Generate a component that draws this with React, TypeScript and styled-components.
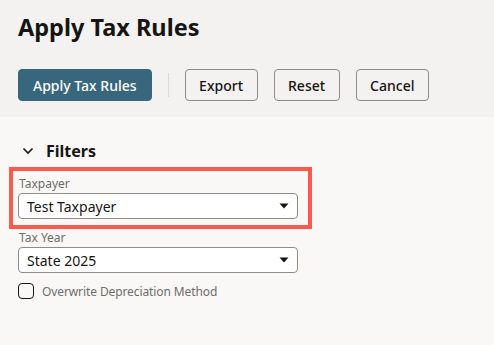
import React from "react";
import styled, { createGlobalStyle } from "styled-components";

const Global = createGlobalStyle`
  html, body { margin: 0; padding: 0; }
  body {
    background: #f9f8f6;
    font-family: "Noto Sans", "Open Sans", sans-serif;
    color: #161513;
  }
  * { box-sizing: border-box; }
`;

const Page = styled.div`
  display: flex;
  flex-direction: column;
  min-height: 345px;
`;

const Header = styled.header`
  background: #f3f2f0;
  height: 117px;
  padding: 10px 18px 0;
  display: flex;
  flex-direction: column;
`;

const Title = styled.h1`
  margin: 0;
  font-size: 23.5px;
  line-height: 34px;
  font-weight: 700;
  color: #161513;
`;

const Toolbar = styled.div`
  margin-top: 25px;
  display: flex;
  align-items: center;
  gap: 16px;
`;

const Button = styled.button<{ $primary?: boolean }>`
  height: 32px;
  padding: 0 ${(p) => (p.$primary ? "14px" : "13.5px")};
  border-radius: 4px;
  font-family: inherit;
  font-size: 14px;
  font-weight: 500;
  cursor: pointer;
  border: 1px solid ${(p) => (p.$primary ? "#36677d" : "#8f8c88")};
  background: ${(p) => (p.$primary ? "#36677d" : "transparent")};
  color: ${(p) => (p.$primary ? "#ffffff" : "#161513")};
`;

const Divider = styled.span`
  width: 1px;
  height: 24px;
  background: #dcd9d5;
`;

const Content = styled.main`
  flex: 1;
  padding: 22px 18px 0;
  display: flex;
  flex-direction: column;
`;

const SectionHeader = styled.div`
  display: flex;
  align-items: center;
  height: 24px;
  gap: 12px;
  padding-left: 4px;
`;

const SectionTitle = styled.h2`
  margin: 0;
  font-size: 16px;
  font-weight: 700;
  line-height: 24px;
`;

const Fields = styled.div`
  margin-top: 12px;
  width: 280px;
  display: flex;
  flex-direction: column;
  gap: 10px;
`;

const Field = styled.div<{ $highlight?: boolean }>`
  position: relative;
  display: flex;
  flex-direction: column;
  ${(p) =>
    p.$highlight &&
    `
    &::after {
      content: "";
      position: absolute;
      top: -8px;
      left: -9px;
      right: -14px;
      bottom: -10px;
      border: 4px solid #fc5a4c;
      pointer-events: none;
    }
  `}
`;

const Label = styled.label`
  font-size: 12px;
  line-height: 18px;
  color: #6f6c69;
  padding-left: 1px;
`;

const Select = styled.div`
  height: 26px;
  border: 1px solid #8f8c88;
  border-radius: 4px;
  background: #ffffff;
  display: flex;
  align-items: center;
  justify-content: space-between;
  padding: 0 8px 0 8px;
  font-size: 14px;
  color: #161513;
`;

const CheckRow = styled.label`
  display: flex;
  align-items: center;
  gap: 8px;
  height: 16px;
`;

const Box = styled.span`
  width: 16px;
  height: 16px;
  border: 1px solid #161513;
  border-radius: 4px;
  background: transparent;
`;

const CheckText = styled.span`
  font-size: 12px;
  font-weight: 400;
  letter-spacing: -0.1px;
  color: #6f6c69;
`;

const Caret = () => (
  <svg width="10" height="6" viewBox="0 0 10 6">
    <path d="M0.5 0.5 L9.5 0.5 L5 5.5 Z" fill="#161513" />
  </svg>
);

const Chevron = () => (
  <svg width="12" height="8" viewBox="0 0 12 8">
    <path d="M1.5 1.5 L6 6 L10.5 1.5" fill="none" stroke="#161513" strokeWidth="1.6" />
  </svg>
);

export default function App() {
  return (
    <Page>
      <Global />
      <Header>
        <Title>Apply Tax Rules</Title>
        <Toolbar>
          <Button $primary>Apply Tax Rules</Button>
          <Divider />
          <Button>Export</Button>
          <Button>Reset</Button>
          <Button>Cancel</Button>
        </Toolbar>
      </Header>
      <Content>
        <SectionHeader>
          <Chevron />
          <SectionTitle>Filters</SectionTitle>
        </SectionHeader>
        <Fields>
          <Field $highlight>
            <Label>Taxpayer</Label>
            <Select>
              <span>Test Taxpayer</span>
              <Caret />
            </Select>
          </Field>
          <Field>
            <Label>Tax Year</Label>
            <Select>
              <span>State 2025</span>
              <Caret />
            </Select>
          </Field>
          <CheckRow>
            <Box />
            <CheckText>Overwrite Depreciation Method</CheckText>
          </CheckRow>
        </Fields>
      </Content>
    </Page>
  );
}
